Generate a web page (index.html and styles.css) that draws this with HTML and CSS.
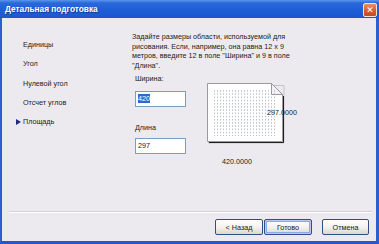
FILE: index.html
```html
<!DOCTYPE html>
<html lang="ru">
<head>
    <meta charset="UTF-8">
    <title>Детальная подготовка</title>
<link rel="stylesheet" href="styles.css">
</head>
<body>
<div class="window">
    <div class="titlebar">
        <span class="title">Детальная подготовка</span>
        <span class="close">&#x2715;</span>
    </div>
    <div class="frame">
        <div class="main">
            <ul class="steps">
                <li><span class="marker"></span>Единицы</li>
                <li><span class="marker"></span>Угол</li>
                <li><span class="marker"></span>Нулевой угол</li>
                <li><span class="marker"></span>Отсчет углов</li>
                <li class="active"><span class="marker"></span>Площадь</li>
            </ul>
            <div class="content">
                <p class="hint">Задайте размеры области, используемой для<br>рисования. Если, например, она равна 12 x 9<br>метров, введите 12 в поле "Ширина" и 9 в поле<br>"Длина".</p>
                <div class="area">
                    <div class="fields">
                        <label class="lbl">Ширина:</label>
                        <div class="input"><span class="sel">420</span></div>
                        <label class="lbl lbl2">Длина</label>
                        <div class="input">297</div>
                    </div>
                    <div class="drawing">
                        <svg width="80" height="64" viewBox="0 0 80 64">
                            <defs>
                                <pattern id="dots" width="3" height="3.2" patternUnits="userSpaceOnUse">
                                    <rect x="1" y="1" width="1" height="1" fill="#9aa4b0"/>
                                </pattern>
                            </defs>
                            <polygon points="1.5,2.5 77,2.5 77,60 1.5,60" fill="none" stroke="#c4c3c7"/>
                            <polyline points="76.5,13 76.5,59.5 2,59.5" fill="none" stroke="#202020"/>
                            <polygon points="0.5,0.5 64.5,0.5 75.5,11.5 75.5,58.5 0.5,58.5" fill="#fff" stroke="#9a9a9e"/>
                            <polygon points="64.5,0.5 64.5,11.5 75.5,11.5" fill="#f2f2f2" stroke="#9a9a9e"/>
                            <rect x="6" y="6" width="64" height="47" fill="url(#dots)"/>
                        </svg>
                        <span class="dim dim-h">297.0000</span>
                        <span class="dim dim-w">420.0000</span>
                    </div>
                </div>
            </div>
        </div>
        <div class="footer">
            <button class="btn back">&lt; Назад</button>
            <button class="btn default">Готово</button>
            <button class="btn cancel">Отмена</button>
        </div>
    </div>
</div>
</body>
</html>
```

FILE: styles.css
```css
* {
    box-sizing: border-box;
}

body {
    margin: 0;
    font-family: "Liberation Sans", Arial, sans-serif;
    font-size: 7.2px;
    color: #1a1a1a;
    background: #fff;
}

.window {
    width: 379px;
    height: 244px;
    display: flex;
    flex-direction: column;
}

.titlebar {
    height: 18px;
    display: flex;
    align-items: center;
    justify-content: space-between;
    padding: 0 2px 0 5px;
    background: linear-gradient(#5b95ec 0, #2a68dc 3px, #1f5dd6 55%, #1c57cf 100%);
}

.title {
    color: #fff;
    font-weight: bold;
    font-size: 8.3px;
    text-shadow: 1px 1px 0 #0d3b9a;
}

.close {
    width: 14px;
    height: 14px;
    margin-top: 2px;
    border: 1px solid #f3e3dc;
    border-radius: 2px;
    background: linear-gradient(#ea8e6a, #d65a2c 60%, #c44a20);
    color: #fff;
    font-family: "DejaVu Sans", sans-serif;
    font-size: 9px;
    font-weight: bold;
    line-height: 12px;
    text-align: center;
}

.frame {
    flex: 1;
    display: flex;
    flex-direction: column;
    background: #eceaee;
    border-left: 2px solid #2c5fce;
    border-right: 3px solid #2c5fce;
    border-bottom: 3px solid #2458c8;
}

.main {
    flex: 1;
    display: flex;
}

.steps {
    list-style: none;
    margin: 0;
    padding: 17px 0 0 14px;
    width: 130px;
}

.steps li {
    display: flex;
    align-items: center;
    height: 19.3px;
    color: #222;
}

.marker {
    width: 7px;
    height: 6px;
}

.active .marker {
    width: 0;
    height: 0;
    margin-right: 2px;
    border-left: 5px solid #1c2a80;
    border-top: 3px solid transparent;
    border-bottom: 3px solid transparent;
}

.content {
    flex: 1;
    padding-top: 14px;
}

.hint {
    margin: 0;
    line-height: 9.5px;
    color: #222;
    white-space: nowrap;
}

.area {
    display: flex;
    margin-top: 4px;
}

.fields {
    display: flex;
    flex-direction: column;
    width: 75px;
    padding-left: 3px;
}

.lbl {
    line-height: 9.5px;
    margin-bottom: 7px;
}

.lbl2 {
    margin-top: 16px;
    margin-bottom: 6px;
}

.input {
    width: 51px;
    height: 16px;
    border: 1px solid #7f9db9;
    background: #fff;
    padding-left: 2px;
    line-height: 14px;
}

.sel {
    background: #3169c6;
    color: #fff;
}

.drawing {
    position: relative;
    margin-top: 9px;
    width: 80px;
    height: 85px;
}

.drawing svg {
    display: block;
}

.dim {
    position: absolute;
    line-height: 9px;
    color: #222;
}

.dim-h {
    left: 60px;
    top: 25px;
}

.dim-w {
    left: 15px;
    top: 74px;
}

.footer {
    height: 30px;
    margin: 0 4px 0 7px;
    border-top: 1px solid #d4d1d6;
    box-shadow: inset 0 1px 0 #fff;
    display: flex;
    justify-content: flex-end;
    align-items: flex-start;
    padding: 7px 3px 0 0;
}

.btn {
    width: 48px;
    height: 16px;
    padding: 0;
    font-family: "Liberation Sans", Arial, sans-serif;
    font-size: 7.2px;
    color: #222;
    border: 1px solid #2f4f86;
    border-radius: 2px;
    background: linear-gradient(#ffffff, #f3f2ee 50%, #dcd8cf);
}

.default {
    margin-left: 1px;
    box-shadow: inset 0 0 0 1px #b3cbf2, inset 0 0 0 2px #8aaae6;
}

.cancel {
    margin-left: 10px;
    width: 47px;
}
```
